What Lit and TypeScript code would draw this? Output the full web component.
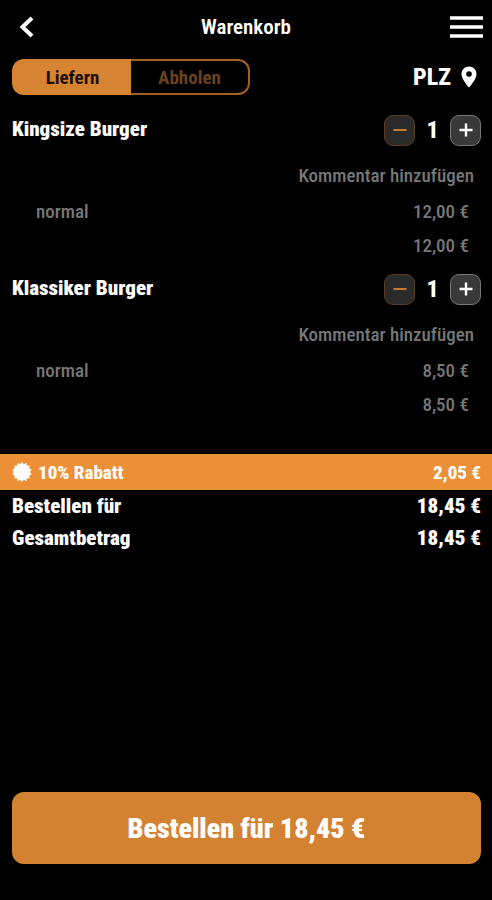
import { LitElement, html, css } from "lit";
import { customElement, property, state } from "lit/decorators.js";

interface Item {
  name: string;
  option: string;
  price: number;
  count: number;
}

const euro = (value: number) => `${value.toFixed(2).replace(".", ",")} €`;

@customElement("cart-item")
class CartItem extends LitElement {
  @property({ attribute: false }) item!: Item;

  static styles = css`
    :host {
      display: block;
      padding-bottom: 6px;
    }
    .head,
    .stepper,
    .row {
      display: flex;
      align-items: center;
    }
    .head {
      justify-content: space-between;
      height: 40px;
      padding: 0 11px 0 12px;
    }
    .name {
      margin: 0;
      padding-bottom: 3px;
      font-size: 21px;
      font-weight: 900;
      line-height: 24px;
    }
    .step {
      box-sizing: border-box;
      display: grid;
      place-items: center;
      width: 31px;
      height: 31px;
      padding: 0;
      border: 1px solid #777;
      border-radius: 9px;
      background: #393939;
      color: #fff;
    }
    .step.minus {
      border-color: #5a3c20;
      background: #2a2a2a;
      color: #c67c35;
    }
    .count {
      width: 35px;
      font-size: 24px;
      font-weight: 800;
      text-align: center;
    }
    .comment {
      display: block;
      height: 45px;
      margin-left: auto;
      padding: 6px 18px 0 0;
      border: 0;
      background: none;
      color: #777;
      font: inherit;
      font-size: 19px;
      font-weight: 500;
      line-height: 38px;
    }
    .row {
      justify-content: space-between;
      height: 34px;
      padding: 0 23px 0 36px;
      color: #777;
      font-size: 19px;
      font-weight: 500;
      line-height: 24px;
    }
    .row.total {
      justify-content: flex-end;
    }
  `;

  private step(by: number) {
    this.dispatchEvent(new CustomEvent("step", { detail: by }));
  }

  render() {
    const { name, option, price, count } = this.item;
    return html`
      <div class="head">
        <h2 class="name">${name}</h2>
        <div class="stepper">
          <button class="step minus" aria-label="Weniger" @click=${() => this.step(-1)}>
            <svg width="14" height="14" viewBox="0 0 14 14" aria-hidden="true">
              <path d="M0.5 7h13" stroke="currentColor" stroke-width="2" />
            </svg>
          </button>
          <span class="count">${count}</span>
          <button class="step" aria-label="Mehr" @click=${() => this.step(1)}>
            <svg width="14" height="14" viewBox="0 0 14 14" aria-hidden="true">
              <path d="M0.5 7h13M7 0.5v13" stroke="currentColor" stroke-width="2.4" />
            </svg>
          </button>
        </div>
      </div>
      <button class="comment">Kommentar hinzufügen</button>
      <div class="row"><span>${option}</span><span>${euro(price)}</span></div>
      <div class="row total"><span>${euro(price * count)}</span></div>
    `;
  }
}

const sealPath = (() => {
  const points: string[] = [];
  for (let i = 0; i < 28; i++) {
    const radius = i % 2 ? 8 : 10;
    const angle = (i * Math.PI) / 14;
    points.push(
      `${(10 + radius * Math.sin(angle)).toFixed(2)} ${(10 - radius * Math.cos(angle)).toFixed(2)}`
    );
  }
  return `M${points.join("L")}Z`;
})();

@customElement("app-root")
class AppRoot extends LitElement {
  @state() private mode = "Liefern";
  @state() private items: Item[] = [
    { name: "Kingsize Burger", option: "normal", price: 12, count: 1 },
    { name: "Klassiker Burger", option: "normal", price: 8.5, count: 1 },
  ];

  static styles = css`
    :host {
      box-sizing: border-box;
      display: flex;
      flex-direction: column;
      min-height: 100vh;
      background: #000;
      color: #fff;
      font-family: "Roboto Condensed", Roboto, sans-serif;
    }
    button {
      margin: 0;
      padding: 0;
      border: 0;
      background: none;
      color: inherit;
      font: inherit;
    }
    svg {
      display: block;
    }
    .bar {
      display: grid;
      grid-template-columns: 1fr auto 1fr;
      align-items: center;
      height: 54px;
      padding: 0 9px;
    }
    .title {
      margin: 0;
      font-size: 21px;
      font-weight: 600;
      line-height: 24px;
    }
    .back {
      justify-self: start;
      padding: 0 10px;
    }
    .menu {
      justify-self: end;
    }
    .tools {
      display: flex;
      align-items: center;
      justify-content: space-between;
      height: 46px;
      padding: 0 15px 0 12px;
    }
    .modes {
      display: grid;
      grid-template-columns: 1fr 1fr;
      width: 238px;
      height: 36px;
    }
    .mode {
      border: 2px solid #a06027;
      color: #6b4120;
      font-size: 19px;
      font-weight: 700;
    }
    .mode:first-child {
      border-right: 0;
      border-radius: 12px 0 0 12px;
    }
    .mode:last-child {
      border-left: 0;
      border-radius: 0 12px 12px 0;
    }
    .mode.active {
      border-color: #d68431;
      background: #d68431;
      color: #1c0e02;
    }
    .plz {
      display: flex;
      align-items: center;
      gap: 10px;
      font-size: 24px;
      font-weight: 800;
    }
    .items {
      padding-top: 10px;
    }
    .line {
      display: flex;
      align-items: center;
      justify-content: space-between;
      height: 32px;
      padding: 0 11px 0 12px;
      font-size: 21px;
      font-weight: 900;
    }
    .discount {
      height: 36px;
      margin-top: 26px;
      background: #ec9037;
      font-size: 19px;
      font-weight: 800;
    }
    .label {
      display: flex;
      align-items: center;
      gap: 6px;
    }
    .foot {
      margin-top: auto;
      padding: 16px 11px 36px 12px;
    }
    .order {
      width: 100%;
      height: 72px;
      border-radius: 12px;
      background: #d38231;
      font-size: 28px;
      font-weight: 900;
    }
  `;

  private change(index: number, by: number) {
    this.items = this.items.map((item, i) =>
      i === index ? { ...item, count: Math.max(1, item.count + by) } : item
    );
  }

  render() {
    const sum = this.items.reduce((acc, item) => acc + item.price * item.count, 0);
    const discount = Math.round(sum * 10) / 100;
    const total = euro(sum - discount);
    return html`
      <header class="bar">
        <button class="back" aria-label="Zurück">
          <svg width="15" height="22" viewBox="0 0 15 22">
            <path d="M13 2 3.500 11l9.500 9" fill="none" stroke="currentColor" stroke-width="4" />
          </svg>
        </button>
        <h1 class="title">Warenkorb</h1>
        <button class="menu" aria-label="Menü">
          <svg width="33" height="22" viewBox="0 0 33 22">
            <path d="M0 2h33M0 11h33M0 20h33" stroke="currentColor" stroke-width="3.6" />
          </svg>
        </button>
      </header>
      <div class="tools">
        <div class="modes">
          ${["Liefern", "Abholen"].map(
            (mode) => html`<button
              class="mode ${mode === this.mode ? "active" : ""}"
              aria-pressed=${mode === this.mode}
              @click=${() => (this.mode = mode)}
            >${mode}</button>`
          )}
        </div>
        <button class="plz">
          PLZ
          <svg width="16" height="22" viewBox="0 0 16 22" aria-hidden="true">
            <path
              fill="currentColor"
              fill-rule="evenodd"
              d="M8 .5C3.8.5.5 3.8.5 8 .5 13.500 8 21.500 8 21.500S15.500 13.500 15.500 8C15.500 3.800 12.200.5 8 .5ZM8 5.200a2.800 2.800 0 1 1 0 5.600 2.800 2.800 0 0 1 0-5.600Z"
            />
          </svg>
        </button>
      </div>
      <main class="items">
        ${this.items.map(
          (item, i) => html`<cart-item
            .item=${item}
            @step=${(e: CustomEvent<number>) => this.change(i, e.detail)}
          ></cart-item>`
        )}
      </main>
      <div class="line discount">
        <span class="label">
          <svg width="20" height="20" viewBox="0 0 20 20" aria-hidden="true">
            <path fill="currentColor" d=${sealPath} />
          </svg>
          10% Rabatt
        </span>
        <span>${euro(discount)}</span>
      </div>
      <div class="line"><span>Bestellen für</span><span>${total}</span></div>
      <div class="line"><span>Gesamtbetrag</span><span>${total}</span></div>
      <footer class="foot">
        <button class="order">Bestellen für ${total}</button>
      </footer>
    `;
  }
}
